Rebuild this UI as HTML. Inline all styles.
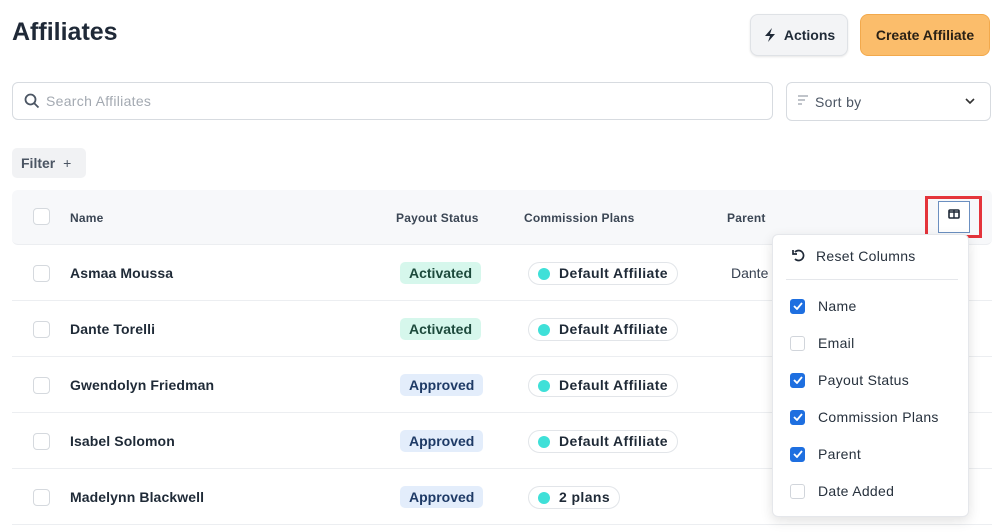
<!DOCTYPE html>
<html><head><style>
*{box-sizing:border-box;margin:0;padding:0}
body{width:1000px;height:532px;overflow:hidden;background:#fff;font-family:"Liberation Sans",sans-serif;color:#1f2a37;position:relative}
.a{position:absolute}
.btn{position:absolute;border-radius:8px;font-weight:bold;font-size:14px;display:flex;align-items:center;justify-content:center}
.cb{position:absolute;width:17px;height:17px;border:1px solid #d5d9de;border-radius:4px;background:#fff}
.row{position:absolute;left:12px;width:980px;height:56px;border-bottom:1px solid #eceef1}
.nm{position:absolute;left:58px;top:20px;font-weight:bold;font-size:14px;color:#1f2a37;letter-spacing:.1px}
.st{position:absolute;left:388px;top:17px;height:22px;padding:0 9px;border-radius:5px;font-size:14px;font-weight:bold;line-height:22px}
.act{background:#d6f7ec;color:#1d4a3c}
.apr{background:#e3edfb;color:#1e3a66}
.pl{position:absolute;left:516px;top:17px;height:23px;border:1px solid #e2e5e9;border-radius:12px;padding:0 9px;font-size:14px;font-weight:bold;line-height:21px;display:flex;align-items:center;letter-spacing:.4px}
.dot{width:12px;height:12px;border-radius:50%;background:#3fe0d8;margin-right:9px}
.th{position:absolute;top:211px;font-size:12px;font-weight:bold;color:#3b4654;letter-spacing:.2px}
.it{position:absolute;left:790px;font-size:14px;color:#27313d;display:flex;align-items:center;letter-spacing:.3px}
.it .c{width:15px;height:15px;border-radius:3px;margin-right:13px;border:1px solid #d1d5db;background:#fff;display:flex;align-items:center;justify-content:center}
.it .on{background:#1e6fe0;border-color:#1e6fe0}
</style></head><body>
<div class="a" style="left:12px;top:18px;font-size:25px;font-weight:bold;color:#1f2937">Affiliates</div>
<div class="btn" style="left:750px;top:14px;width:98px;height:42px;background:#f3f4f6;border:1px solid #dfe2e6;box-shadow:0 1px 2px rgba(0,0,0,.1)"><svg width="14" height="16" viewBox="0 0 14 16" style="margin-right:7px"><path d="M9 1L2 9h5l-2 6 7-8H7z" fill="#1f2937"/></svg>Actions</div>
<div class="btn" style="left:860px;top:14px;width:130px;height:42px;background:#fbbd6b;border:1px solid #f2a94c;color:#2a2116">Create Affiliate</div>
<div class="a" style="left:12px;top:82px;width:761px;height:38px;border:1px solid #d7dbe0;border-radius:6px"></div>
<svg class="a" style="left:24px;top:93px" width="16" height="16" viewBox="0 0 16 16"><circle cx="6.5" cy="6.5" r="5" fill="none" stroke="#4b5563" stroke-width="1.8"/><path d="M10 10l4.5 4.5" stroke="#4b5563" stroke-width="1.8"/></svg>
<div class="a" style="left:46px;top:93px;font-size:14px;color:#a3a9b1;letter-spacing:.3px">Search Affiliates</div>
<div class="a" style="left:786px;top:82px;width:205px;height:39px;border:1px solid #d7dbe0;border-radius:6px"></div>
<svg class="a" style="left:797px;top:94px" width="12" height="14" viewBox="0 0 12 14"><path d="M1 2h10M1 6h7M1 10h4" stroke="#9aa1aa" stroke-width="1.3"/></svg>
<div class="a" style="left:815px;top:94px;font-size:14px;color:#4b5563;letter-spacing:.3px">Sort by</div>
<svg class="a" style="left:965px;top:98px" width="10" height="7" viewBox="0 0 10 7"><path d="M1 1l4 4 4-4" fill="none" stroke="#333" stroke-width="1.6"/></svg>
<div class="a" style="left:12px;top:148px;width:74px;height:30px;background:#f1f2f4;border-radius:5px;font-size:14px;font-weight:bold;color:#4b5563;line-height:30px;padding-left:9px">Filter <span style="font-weight:normal;margin-left:4px">+</span></div>
<div class="a" style="left:12px;top:190px;width:980px;height:55px;background:#f7f8fa;border-radius:6px;border-bottom:1px solid #eceef1"></div>
<div class="cb" style="left:33px;top:208px"></div>
<div class="th" style="left:70px">Name</div>
<div class="th" style="left:396px">Payout Status</div>
<div class="th" style="left:524px">Commission Plans</div>
<div class="th" style="left:727px">Parent</div>
<div class="a" style="left:925px;top:196px;width:57px;height:42px;border:3px solid #e4343b"></div>
<div class="a" style="left:938px;top:201px;width:32px;height:32px;border:1px solid #6b8fc0;background:#fff"></div>
<svg class="a" style="left:948px;top:209px" width="12" height="10" viewBox="0 0 12 10"><rect x="1" y="1" width="10" height="8" rx="1" fill="none" stroke="#1f2937" stroke-width="1.6"/><path d="M6 1v8M1 3h10" stroke="#1f2937" stroke-width="1.4"/></svg>

<div class="row" style="top:245px"><div class="cb" style="left:21px;top:20px"></div><div class="nm">Asmaa Moussa</div><div class="st act">Activated</div><div class="pl"><span class="dot"></span>Default Affiliate</div><div class="a" style="left:719px;top:20px;font-size:14px;color:#374151">Dante</div></div>
<div class="row" style="top:301px"><div class="cb" style="left:21px;top:20px"></div><div class="nm">Dante Torelli</div><div class="st act">Activated</div><div class="pl"><span class="dot"></span>Default Affiliate</div></div>
<div class="row" style="top:357px"><div class="cb" style="left:21px;top:20px"></div><div class="nm">Gwendolyn Friedman</div><div class="st apr">Approved</div><div class="pl"><span class="dot"></span>Default Affiliate</div></div>
<div class="row" style="top:413px"><div class="cb" style="left:21px;top:20px"></div><div class="nm">Isabel Solomon</div><div class="st apr">Approved</div><div class="pl"><span class="dot"></span>Default Affiliate</div></div>
<div class="row" style="top:469px"><div class="cb" style="left:21px;top:20px"></div><div class="nm">Madelynn Blackwell</div><div class="st apr">Approved</div><div class="pl"><span class="dot"></span>2 plans</div></div>

<div class="a" style="left:772px;top:234px;width:197px;height:283px;background:#fff;border:1px solid #e5e7eb;border-radius:6px;box-shadow:0 4px 12px rgba(0,0,0,.12)"></div>
<svg class="a" style="left:792px;top:248px" width="15" height="15" viewBox="0 0 15 15"><path d="M3 4A5 5 0 1 1 3 11" fill="none" stroke="#1f2937" stroke-width="1.7"/><path d="M1 2v4h4" fill="none" stroke="#1f2937" stroke-width="1.7"/></svg>
<div class="a" style="left:816px;top:248px;font-size:14px;color:#27313d;letter-spacing:.3px">Reset Columns</div>
<div class="a" style="left:786px;top:279px;width:172px;height:1px;background:#e5e7eb"></div>
<div class="it" style="top:298px"><span class="c on"><svg width="10" height="8" viewBox="0 0 10 8"><path d="M1 4l3 3 5-6" fill="none" stroke="#fff" stroke-width="1.8"/></svg></span>Name</div>
<div class="it" style="top:335px"><span class="c"></span>Email</div>
<div class="it" style="top:372px"><span class="c on"><svg width="10" height="8" viewBox="0 0 10 8"><path d="M1 4l3 3 5-6" fill="none" stroke="#fff" stroke-width="1.8"/></svg></span>Payout Status</div>
<div class="it" style="top:409px"><span class="c on"><svg width="10" height="8" viewBox="0 0 10 8"><path d="M1 4l3 3 5-6" fill="none" stroke="#fff" stroke-width="1.8"/></svg></span>Commission Plans</div>
<div class="it" style="top:446px"><span class="c on"><svg width="10" height="8" viewBox="0 0 10 8"><path d="M1 4l3 3 5-6" fill="none" stroke="#fff" stroke-width="1.8"/></svg></span>Parent</div>
<div class="it" style="top:483px"><span class="c"></span>Date Added</div>
</body></html>
